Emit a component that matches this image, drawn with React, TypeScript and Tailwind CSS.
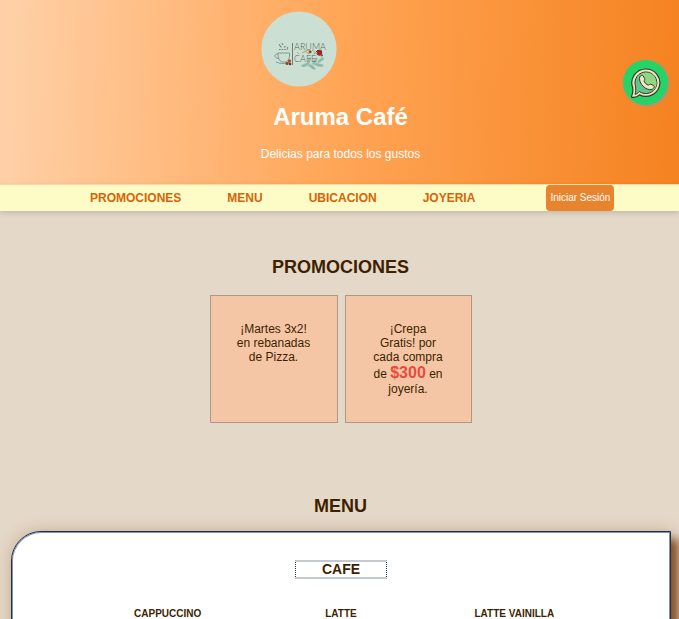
const navLinks = [
  { label: "PROMOCIONES", href: "#promociones" },
  { label: "MENU", href: "#menu" },
  { label: "UBICACION", href: "#ubicacion" },
  { label: "JOYERIA", href: "#joyeria" },
];

const coffees = ["CAPPUCCINO", "LATTE", "LATTE VAINILLA"];

function Logo() {
  return (
    <svg className="size-[76px]" viewBox="0 0 76 76" role="img" aria-label="Aruma Café">
      <circle cx="38" cy="38" r="37.6" fill="#cbdfd3" />
      <g fill="none" stroke="#6f8a80" strokeWidth="0.8">
        <path d="M17 42h11.500c.5 4-1 8-3.500 9h-4c-3-1-4.300-5-4-9Z" />
        <path d="M17 43c-4-.8-4.500 4.500.8 4.500M15 51c4 2 10 2 14 0" />
        <path d="M31.500 32v22" stroke="#53645d" />
      </g>
      <path
        d="M18 38.500h8.500M19 35.500l2 .5M23 36l2-.5M18 33.500l1.500 1M21 32.500l1.500 1.500M26 36.500l1 1"
        fill="none"
        stroke="#6b7d75"
        strokeWidth="1.200"
        strokeDasharray="1.600 1"
      />
      <g fill="#8fb9a9">
        <path d="M39 54c7-3 12 0 16-3s5-6 7-7c-1 7-6 11-12 11-4 1-8 0-11-1Z" opacity="0.35" />
        <ellipse cx="44" cy="54" rx="3.600" ry="1.300" transform="rotate(-25 44 54)" />
        <ellipse cx="48" cy="50" rx="4" ry="1.400" transform="rotate(-65 48 50)" />
        <ellipse cx="51" cy="56" rx="4" ry="1.400" transform="rotate(35 51 56)" />
        <ellipse cx="54" cy="50" rx="4" ry="1.500" transform="rotate(-60 54 50)" />
        <ellipse cx="58" cy="54" rx="4.500" ry="1.400" transform="rotate(10 58 54)" />
        <ellipse cx="60" cy="49" rx="3.500" ry="1.300" transform="rotate(-35 60 49)" />
      </g>
      <text x="33" y="39" fontSize="9" fontWeight="300" fill="#53645d" fontFamily="Lato, sans-serif">
        ARUMA
      </text>
      <text x="33" y="51" fontSize="9" fontWeight="300" fill="#53645d" fontFamily="Lato, sans-serif">
        CAFÉ
      </text>
      <path d="M36 41l2 2M41 42l6-3 4 2M44 40l4 3M51 39l5 4" stroke="#a0a65c" strokeWidth="0.9" fill="none" />
      <circle cx="49" cy="41" r="1.400" fill="#8d4b32" />
      <circle cx="58.500" cy="42" r="2.700" fill="#a82028" />
      <path d="M55 41l2-2 1 1 3 0M60 45l2-1" stroke="#5d2b24" strokeWidth="1" fill="none" />
      <circle cx="28.500" cy="50" r="1.700" fill="#b0523b" />
      <circle cx="26" cy="52.500" r="1.500" fill="#8d3f2c" />
      <circle cx="29" cy="53" r="1.300" fill="#70331f" />
    </svg>
  );
}

function WhatsAppIcon() {
  return (
    <svg className="size-8" viewBox="0 0 32 32" aria-hidden="true">
      <path
        d="M16 2a14 13.700 0 1 1-6.500 25.900C7.500 29.800 5 30.600 2.500 30.300 1.400 30.200 1.300 29 1.900 28.300 2.900 26.500 3 23.500 2.700 20.500A14 13.700 0 0 1 16 2Z"
        fill="#f7dfb8"
        stroke="#2b3a2d"
        strokeWidth="1.200"
        strokeLinejoin="round"
      />
      <path
        d="M16 5a11 10.800 0 1 1-6.700 19.500C8 26.200 6.500 27 5 27.300 5.900 25 5.900 22 5.500 19A11 10.800 0 0 1 16 5Z"
        fill="#5fc58a"
        stroke="#2b3a2d"
        strokeWidth="1"
        strokeLinejoin="round"
      />
      <path d="M16 5.600a10.400 10.300 0 0 1 7.500 17.500L8.600 8.600A10.400 10.300 0 0 1 16 5.600Z" fill="#8ed783" />
      <path
        d="M10.500 8.700c.9-.8 2.200-.6 2.800.3l1.300 2.500c.6 1.100-.6 1.900-.5 2.700.7 1.900 2.200 3.200 4 3.900.9.200 1.700-1.300 2.700-.9l2.700 1.300c.9.500 1 1.800.3 2.500-1.500 1.700-3.900 2-6.100 1.200-3.500-1.300-6.200-4-7.500-7.300-.9-2.300-1-4.600.3-6.200Z"
        fill="#f7e4c3"
        stroke="#2b3a2d"
        strokeWidth="1"
        strokeLinejoin="round"
      />
    </svg>
  );
}

export default function App() {
  return (
    <div className="h-screen overflow-hidden bg-[#e4d8c8] font-['Liberation_Sans',Arial,sans-serif] text-xs text-[#3e1f00]">
      <header className="flex h-46 justify-center bg-[linear-gradient(92deg,#ffd1a9_0%,#ffa556_50%,#f58220_100%)] pt-[11px] pl-0.5 text-white">
        <div>
          <Logo />
          <h1 className="mt-4 text-center text-2xl leading-7 font-bold">Aruma Café</h1>
          <p className="mt-4 text-center leading-[14px]">Delicias para todos los gustos</p>
        </div>
      </header>

      <nav className="relative flex h-[27px] items-center border-t border-[#fbd8a0] bg-[#fdfbc6] pl-[90px] shadow-[0_2px_5px_rgba(0,0,0,0.15)]">
        <ul className="flex gap-[46px] font-bold text-[#d86407]">
          {navLinks.map((link) => (
            <li key={link.label}>
              <a href={link.href}>{link.label}</a>
            </li>
          ))}
        </ul>
        <button
          type="button"
          className="ml-[71px] h-[26px] rounded bg-[#e8842e] px-1 text-[10px] whitespace-nowrap text-white"
        >
          Iniciar Sesión
        </button>
      </nav>

      <a
        href="#whatsapp"
        aria-label="WhatsApp"
        className="fixed top-[60px] right-[11px] flex size-[45px] items-center justify-center rounded-full bg-[#25d366] shadow-[1px_1px_3px_#999]"
      >
        <WhatsAppIcon />
      </a>

      <main>
        <section id="promociones" className="pt-[46px] pl-0.5">
          <h2 className="text-center text-lg leading-5 font-bold">PROMOCIONES</h2>
          <div className="mt-[18px] flex justify-center gap-[7px] text-center leading-[14px]">
            <p className="size-32 border border-[#ad9988] bg-[#f5c6a5] px-[26px] py-[26px]">
              ¡Martes 3x2! en rebanadas de Pizza.
            </p>
            <p className="h-32 w-[127px] border border-[#ad9988] bg-[#f5c6a5] px-[26px] py-[26px]">
              ¡Crepa Gratis! por cada compra de{" "}
              <strong className="text-base leading-[18px] text-[#e74c3c]">$300</strong> en joyería.
            </p>
          </div>
        </section>

        <section id="menu" className="pt-[73px]">
          <h2 className="pl-0.5 text-center text-lg leading-5 font-bold">MENU</h2>
          <div className="mt-[15px] mr-2 ml-[11px] h-80 rounded-tl-[30px] border border-[#1d3354] bg-white pt-7 shadow-[inset_0_0_0_1px_#8492a8,8px_8px_10px_#8a5226,0_0_16px_rgba(138,82,38,0.3)]">
            <h3 className="mx-auto w-[92px] border-x border-y-2 border-x-[#1d3354] border-y-[#c3c8d2] text-center text-sm leading-[15px] font-bold [border-left-style:dotted] [border-right-style:dotted]">
              CAFE
            </h3>
            <ul className="mx-auto mt-[29px] grid w-[520px] grid-cols-3 text-center text-[10px] leading-3 font-bold">
              {coffees.map((name) => (
                <li key={name}>{name}</li>
              ))}
            </ul>
          </div>
        </section>
      </main>
    </div>
  );
}
